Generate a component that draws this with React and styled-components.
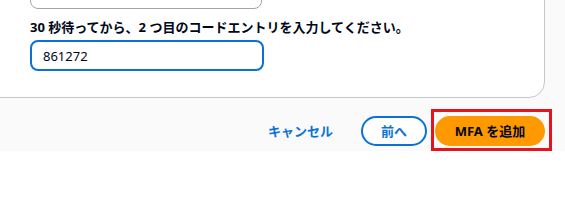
import React from "react";
import styled, { createGlobalStyle } from "styled-components";

const GlobalStyle = createGlobalStyle`
  html, body {
    margin: 0;
    padding: 0;
    background: #ffffff;
  }
  body {
    font-family: "Noto Sans", "Noto Sans CJK JP", sans-serif;
    color: #000716;
    overflow: hidden;
  }
`;

const App = () => {
  return (
    <>
      <GlobalStyle />
      <Page>
        <Card>
          <PrevInput />
          <Label>30 秒待ってから、2 つ目のコードエントリを入力してください。</Label>
          <CodeInput value="861272" readOnly />
        </Card>
        <Footer>
          <LinkButton>キャンセル</LinkButton>
          <NormalButton>前へ</NormalButton>
          <PrimaryButton>
            MFA を追加
            <Highlight />
          </PrimaryButton>
        </Footer>
      </Page>
    </>
  );
};

const Page = styled.div`
  display: flow-root;
  background: #fafafa;
  height: 151px;
`;

const Card = styled.div`
  margin: -30px 20px 0 -20px;
  padding: 0 0 26px 49px;
  background: #ffffff;
  border: 1px solid #c6c6cd;
  border-radius: 0 0 16px 0;
  display: flex;
  flex-direction: column;
  align-items: flex-start;
`;

const PrevInput = styled.div`
  width: 232px;
  height: 38px;
  box-sizing: border-box;
  border: 1px solid #a4a4ad;
  border-radius: 8px;
  background: #ffffff;
`;

const Label = styled.div`
  margin-top: 9px;
  font-size: 13px;
  font-weight: 700;
  line-height: 18px;
  color: #000716;
`;

const CodeInput = styled.input`
  margin-top: 4px;
  width: 234px;
  height: 31px;
  box-sizing: border-box;
  border: 2px solid #0972d3;
  border-radius: 8px;
  padding: 0 11px;
  font-family: "Noto Sans", "Noto Sans CJK JP", sans-serif;
  font-size: 13px;
  color: #000716;
  background: #ffffff;
  outline: none;
`;

const Footer = styled.div`
  display: flex;
  justify-content: flex-end;
  align-items: center;
  gap: 8px;
  padding: 18px 20px 0 0;
`;

const BaseButton = styled.button`
  position: relative;
  height: 30px;
  box-sizing: border-box;
  border-radius: 20px;
  padding: 0 18px;
  font-family: "Noto Sans", "Noto Sans CJK JP", sans-serif;
  font-size: 13px;
  font-weight: 700;
  line-height: 1;
  cursor: pointer;
  white-space: nowrap;
`;

const LinkButton = styled(BaseButton)`
  border: 2px solid transparent;
  background: transparent;
  color: #0972d3;
`;

const NormalButton = styled(BaseButton)`
  min-width: 66px;
  border: 2px solid #0972d3;
  background: #ffffff;
  color: #0972d3;
`;

const PrimaryButton = styled(BaseButton)`
  width: 110px;
  padding: 0;
  border: 2px solid #ff9900;
  background: #ff9900;
  color: #000716;
`;

/* red annotation frame drawn over the primary button */
const Highlight = styled.span`
  position: absolute;
  top: -9px;
  right: -9px;
  bottom: -7px;
  left: -6px;
  border: 3px solid #e3141d;
  pointer-events: none;
`;

export default App;
